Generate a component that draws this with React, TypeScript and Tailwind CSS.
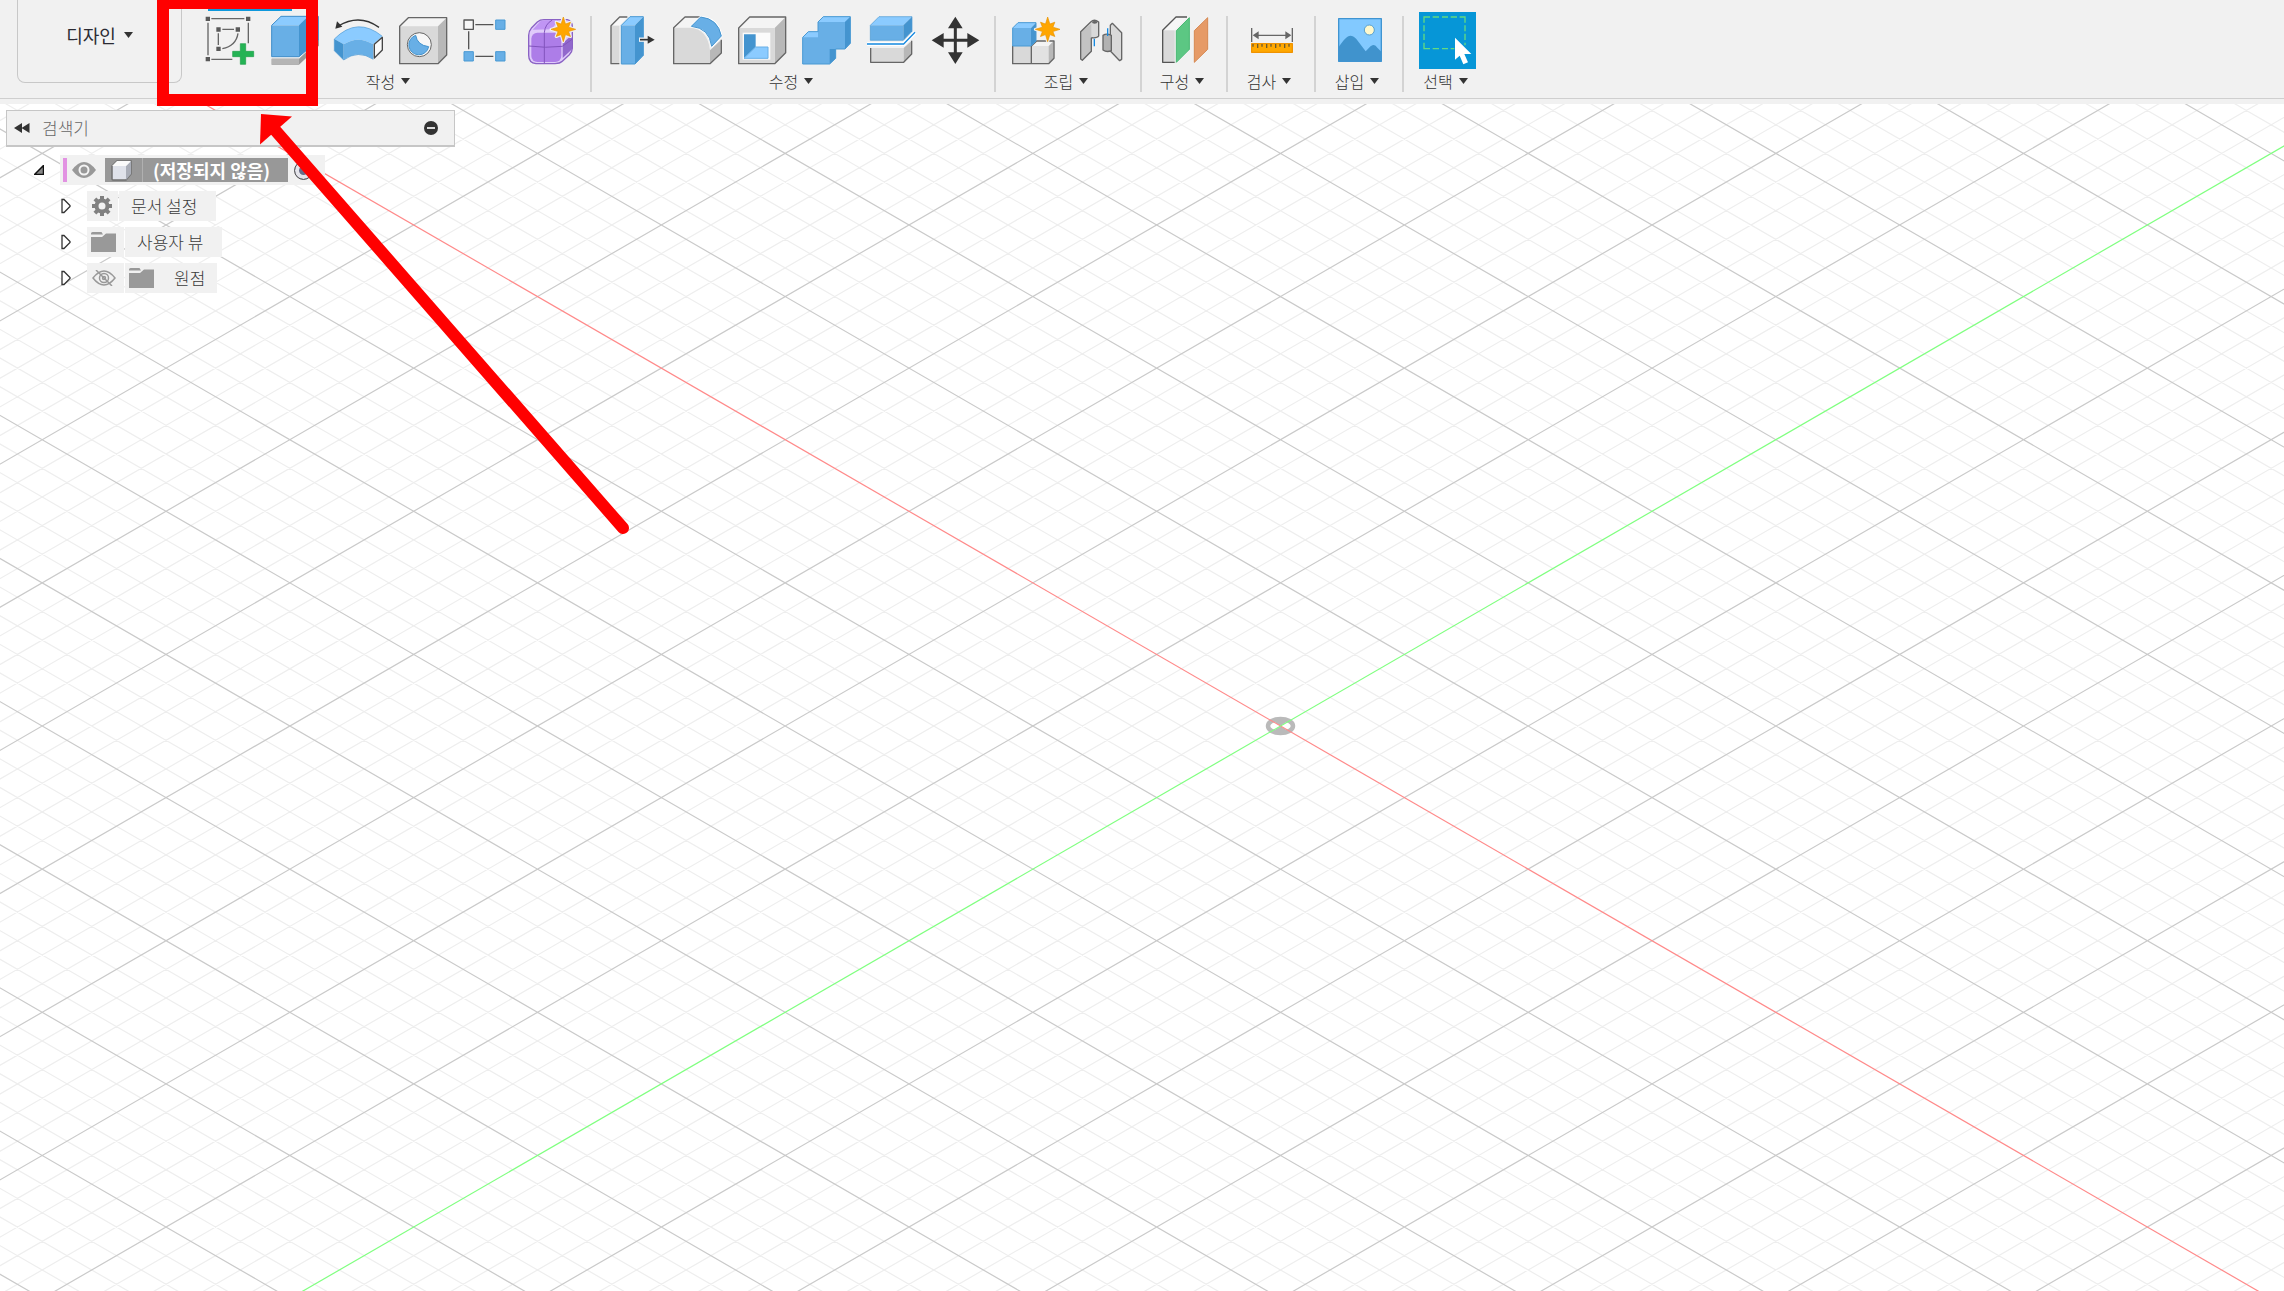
import type { ReactNode } from "react";

const OX = 1280.5;
const OY = 726;
const SLOPE = 0.578;
const STEP = 28.63;

const G = "#666666";
const LIGHT = "#f4f4f4";
const MID = "#d9d9d9";
const DARK = "#b8b8b8";
const B1 = "#8bcbff";
const B2 = "#68afe6";
const B3 = "#4494cf";

const burst = (cx: number, cy: number, outer: number, inner: number) =>
  Array.from({ length: 16 }, (_, i) => {
    const r = i % 2 ? inner : i % 4 === 0 ? outer : outer * 0.82;
    const a = (i * Math.PI) / 8 - Math.PI / 2;
    return `${(cx + r * Math.cos(a)).toFixed(1)},${(cy + r * Math.sin(a)).toFixed(1)}`;
  }).join(" ");

function Caret() {
  return (
    <svg width="9" height="6" viewBox="0 0 9 6" aria-hidden="true">
      <path d="M0 0h9L4.500 6z" fill="#333" />
    </svg>
  );
}

function Tool({ label, box, children }: { label: string; box: string; children: ReactNode }) {
  return (
    <button type="button" aria-label={label} title={label} className="h-[57px] w-14 shrink-0">
      <svg viewBox={box} className="h-full w-full" strokeLinejoin="round">
        {children}
      </svg>
    </button>
  );
}

function Group({ label, pad, last, children }: { label: string; pad: string; last?: boolean; children: ReactNode }) {
  return (
    <section className="flex shrink-0">
      <div className={`flex flex-col items-center pt-3 ${pad}`}>
        <div className="flex gap-2">{children}</div>
        <button type="button" className="flex h-6 items-center gap-1.5 pr-1 text-[16px] font-light leading-6 text-[#333]">
          {label}
          <Caret />
        </button>
      </div>
      {!last && <div className="mt-4 h-[76px] w-0.5 bg-[#d3d3d3]" />}
    </section>
  );
}

function Toolbar() {
  return (
    <header className="relative shrink-0 bg-[#f1f1f1] pb-[5px]">
      <div className="flex h-[99px] items-start border-b border-[#cfcfcf]">
        <button
          type="button"
          className="ml-[17px] flex h-[83px] w-[165px] shrink-0 items-center justify-center gap-2 rounded-b-lg border border-t-0 border-[#c8c8c8] pb-3 text-[18px] font-normal text-[#2b2b33]"
        >
          디자인
          <Caret />
        </button>
        <Group label="작성" pad="pl-5 pr-3">
          <Tool label="스케치 작성" box="606 36 168 171">
            <g stroke={G} strokeWidth="4" fill="none">
              <path d="M634 56H733M624 68V166M634 178H697M745 68V130M655 100V135M667 88H702M714 100Q708 138 667 146" />
            </g>
            <g fill="#595959">
              <path d="M617 50h13v13h-13zM738 50h13v13h-13zM617 171h13v13h-13zM649 82h13v13h-13zM707 82h13v13h-13zM649 140h13v13h-13z" />
            </g>
            <path d="M721 131h16v23h24v16h-24v23h-16v-23h-23v-16h23z" fill="#24b354" stroke="#1d9e48" strokeWidth="2" />
          </Tool>
          <Tool label="돌출" box="798 36 168 171">
            <path d="M815 176h82l60-57v18l-60 57h-82z" fill="#999" />
            <path d="M815 176h82v18h-82z" fill="#b5b5b5" />
            <path d="M815 76l28-27h110l-56 27z" fill={B1} />
            <path d="M815 76h82v94h-82z" fill={B2} />
            <path d="M897 76l28-27h30v72l-58 49z" fill={B3} />
            <path d="M815 76l28-27h112v72l-58 49h-82z" fill="none" stroke="#3e8dc9" strokeWidth="3" />
          </Tool>
          <Tool label="회전" box="30 36 168 171">
            <path d="M177 82Q118 40 55 78" fill="none" stroke="#333" strokeWidth="4" />
            <path d="M46 86l5-22 16 16z" fill="#333" />
            <path d="M43 117Q112 48 187 109L160 133Q114 105 71 133z" fill={B1} />
            <path d="M43 117L71 133V180L43 152z" fill={B3} />
            <path d="M71 133Q114 105 160 133V178Q114 148 71 180z" fill={B2} />
            <path d="M43 117Q112 48 187 109M43 117V152L71 180Q114 148 160 178" fill="none" stroke="#4b99d3" strokeWidth="2" />
            <path d="M163 133L187 112V150L163 174z" fill="#fafafa" stroke="#444" strokeWidth="4" />
          </Tool>
          <Tool label="구멍" box="222 36 168 171">
            <path d="M239 79L265 53H380L354 79z" fill={LIGHT} />
            <path d="M354 79L380 53V165L354 191z" fill={DARK} />
            <path d="M239 79H354V191H239z" fill={MID} />
            <path d="M239 79L265 53H380V165L354 191H239z" fill="none" stroke={G} strokeWidth="4" />
            <circle cx="298" cy="134" r="36" fill="#f7f7f7" stroke={G} strokeWidth="3" />
            <path d="M287 106Q292 136 326 140A30 30 0 1 1 287 106z" fill={B2} stroke={B3} strokeWidth="3" />
          </Tool>
          <Tool label="패턴" box="414 36 168 171">
            <path d="M466 74H520M446 94V148M466 169H520" stroke="#555" strokeWidth="4" />
            <path d="M432 60h28v28h-28z" fill="#f8f8f8" stroke="#555" strokeWidth="4" />
            <path d="M527 60h28v28h-28zM432 155h28v28h-28zM527 155h28v28h-28z" fill={B2} stroke="#4999d3" strokeWidth="3" />
          </Tool>
          <Tool label="양식 작성" box="606 36 168 171">
            <path d="M626 106Q626 94 635 83L652 66Q660 59 672 59H742Q757 63 757 80V145Q757 155 748 164L727 184Q720 191 705 191H648Q626 189 626 166z" fill="#dfcbfa" stroke="#8a62c4" strokeWidth="4" />
            <path d="M638 89L661 64Q668 60 680 61H715L695 88z" fill="#c095f4" />
            <path d="M728 130L756 104V148L728 174z" fill="#9168cc" />
            <rect x="634" y="98" width="90" height="88" rx="18" fill="#ad7de8" />
            <path d="M673 190V98Q675 72 697 60M627 138Q675 145 727 139L756 118" fill="none" stroke="#8254bd" strokeWidth="3" />
            <polygon points={burst(730, 88, 37, 17)} fill="#ffa600" stroke="#f1f1f1" strokeWidth="9" />
            <polygon points={burst(730, 88, 37, 17)} fill="#ffa600" stroke="#e99200" strokeWidth="2" />
          </Tool>
        </Group>
        <Group label="수정" pad="px-[13px]">
          <Tool label="눌러 당기기" box="45 36 168 171">
            <path d="M63 77L89 51H112L88 77z" fill="#f8f8f8" />
            <path d="M63 77H88V191H63z" fill={MID} />
            <path d="M112 51H89L63 77V191H88" fill="none" stroke={G} strokeWidth="4" />
            <path d="M94 76L120 50H160L135 76z" fill={B1} />
            <path d="M135 76L160 50V166L135 192z" fill={B3} />
            <path d="M94 76H135V192H94z" fill={B2} />
            <path d="M94 76L120 50H160V166L135 192H94z" fill="none" stroke="#4999d3" strokeWidth="3" />
            <path d="M147 119H180" stroke="#f1f1f1" strokeWidth="13" />
            <path d="M150 119H176" stroke="#333" strokeWidth="5" />
            <path d="M173 107L194 119L173 131z" fill="#333" />
          </Tool>
          <Tool label="모깎기" box="237 36 168 171">
            <path d="M251 83L285 51H330L302 83z" fill={LIGHT} />
            <path d="M251 83H302Q353 88 360 151V191H251z" fill={MID} />
            <path d="M360 151L394 119V159L360 191z" fill={DARK} />
            <path d="M330 51H285L251 83V191H360L394 159V119" fill="none" stroke={G} strokeWidth="4" />
            <path d="M304 79L332 51Q384 56 394 108L365 139Q358 84 304 79z" fill={B2} stroke="#fff" strokeWidth="7" />
            <path d="M304 79L332 51Q384 56 394 108L365 139Q358 84 304 79z" fill={B2} stroke={B3} strokeWidth="3" />
          </Tool>
          <Tool label="쉘" box="429 36 168 171">
            <path d="M446 84L479 51H587L554 84z" fill={LIGHT} />
            <path d="M554 84L587 51V158L554 191z" fill={DARK} />
            <path d="M446 84H554V191H446z" fill={MID} />
            <path d="M446 84L479 51H587V158L554 191H446z" fill="none" stroke={G} strokeWidth="4" />
            <path d="M458 98H541V179H458z" fill="#fbfbfb" />
            <path d="M462 103H497V141L462 175z" fill={B3} />
            <path d="M497 141H534V175H462z" fill={B1} stroke={B2} strokeWidth="3" />
          </Tool>
          <Tool label="결합" box="621 36 168 171">
            <path d="M638 112L655 95H684V66L700 50H781V130L765 147H737V175L719 192H638z" fill={B2} />
            <path d="M684 66L700 50H781L765 66zM638 112L655 95H684V112z" fill={B1} />
            <path d="M765 66L781 50V130L765 147zM719 147H737V175L719 192z" fill={B3} />
            <path d="M638 112L655 95H684V66L700 50H781V130L765 147H737V175L719 192H638z" fill="none" stroke="#4999d3" strokeWidth="3" />
          </Tool>
          <Tool label="면 분할" box="813 36 168 171">
            <path d="M841 76L867 50H966L940 76z" fill={B1} />
            <path d="M841 76H940V121H841z" fill={B2} />
            <path d="M940 76L966 50V94L940 121z" fill={B3} />
            <path d="M841 76L867 50H966V94L940 121H841z" fill="none" stroke="#4999d3" strokeWidth="2" />
            <path d="M842 144H941V187H842z" fill={MID} />
            <path d="M941 144L965 122V162L941 187z" fill={DARK} />
            <path d="M842 144V187H941L965 162V122" fill="none" stroke={G} strokeWidth="4" />
            <path d="M831 132H941L975 97" fill="none" stroke="#fff" strokeWidth="12" />
            <path d="M831 132H941L975 97" fill="none" stroke="#1589e0" strokeWidth="4" />
          </Tool>
          <Tool label="이동/복사" box="1005 36 168 171">
            <path d="M1096 75V168M1050 121H1142" stroke="#333" strokeWidth="9" />
            <path d="M1096 50L1118 85H1074zM1096 192L1118 157H1074zM1025 121L1061 99V143zM1168 121L1132 99V143z" fill="#333" />
          </Tool>
        </Group>
        <Group label="조립" pad="px-3">
          <Tool label="새 구성요소" box="54 36 168 171">
            <path d="M68 138H124V191H68z" fill={MID} />
            <path d="M124 138L140 123H191L176 138z" fill={LIGHT} />
            <path d="M124 138H176V191H124z" fill="#e2e2e2" />
            <path d="M176 138L191 123V175L176 191z" fill={DARK} />
            <path d="M68 138V191H176L192 175V123H140L124 138V191" fill="none" stroke={G} strokeWidth="4" />
            <path d="M68 84L84 68H138L123 84z" fill={B1} />
            <path d="M68 84H123V138H68z" fill={B2} />
            <path d="M123 84L138 68V123L123 138z" fill={B3} />
            <path d="M68 84L84 68H138V123L123 138H68z" fill="none" stroke="#4999d3" strokeWidth="3" />
            <polygon points={burst(173, 88, 37, 17)} fill="#ffa600" stroke="#f1f1f1" strokeWidth="9" />
            <polygon points={burst(173, 88, 37, 17)} fill="#ffa600" stroke="#e99200" strokeWidth="2" />
          </Tool>
          <Tool label="조인트" box="246 36 168 171">
            <path d="M272 95L303 65Q313 56 326 66V108Q322 115 304 113V154L277 181L272 177z" fill={MID} />
            <path d="M304 72V154L277 181L272 177V95z" fill="#c3c3c3" />
            <path d="M304 113V154L277 181L272 177V95L303 65Q313 56 326 66V108Q322 115 304 113" fill="none" stroke={G} strokeWidth="4" />
            <ellipse cx="314" cy="67" rx="8" ry="4" fill={G} />
            <path d="M313 116V139" stroke="#1589e0" strokeWidth="4" />
            <path d="M361 76L367 70L395 98V178L389 182L361 153z" fill={MID} stroke={G} strokeWidth="4" />
            <path d="M339 106Q350 99 364 106V152Q350 158 339 150z" fill="#b2b2b2" stroke={G} strokeWidth="4" />
            <path d="M353 85V108" stroke="#1589e0" strokeWidth="4" />
          </Tool>
        </Group>
        <Group label="구성" pad="px-3.5">
          <Tool label="평면 간격띄우기" box="498 36 168 171">
            <path d="M518 91L558 51H591L554 91z" fill="#f6f6f6" />
            <path d="M518 91H554V187H518z" fill={MID} />
            <path d="M591 51H558L518 91V187H554" fill="none" stroke="#555" strokeWidth="4" />
            <path d="M559 92L598 53V148L559 187z" fill="#5cc783" stroke="#48b873" strokeWidth="3" />
            <path d="M613 92L653 53V148L613 187z" fill="#e69a66" stroke="#d68851" strokeWidth="3" />
          </Tool>
        </Group>
        <Group label="검사" pad="px-[15px]">
          <Tool label="측정" box="69 36 168 171">
            <path d="M95 84V126M217 84V126M108 106H205" stroke={G} strokeWidth="4" />
            <path d="M98 106L116 94V118zM214 106L196 94V118z" fill={G} />
            <path d="M95 131H217V157H95z" fill="#ffa800" stroke="#f09300" strokeWidth="4" />
            <path d="M99 132v8M113 132v12M126 132v8M140 132v12M153 132v8M167 132v12M180 132v8M194 132v12M207 132v8" stroke="#6c5a30" strokeWidth="4" />
          </Tool>
        </Group>
        <Group label="삽입" pad="px-[15px]">
          <Tool label="이미지 삽입" box="333 36 168 171">
            <path d="M356 56H484V184H356z" fill="#82c9ff" />
            <path d="M356 141C379 109 389 97 409 117L437 154C449 143 458 124 472 143L484 155V184H356z" fill="#4093cd" />
            <circle cx="448" cy="90" r="15" fill="#fff9cd" stroke="#5aa0cc" strokeWidth="3" />
            <path d="M356 56H484V184H356z" fill="none" stroke="#3f94d1" strokeWidth="4" />
          </Tool>
        </Group>
        <Group label="선택" pad="pl-[15px]" last>
          <button type="button" aria-label="선택 도구" aria-pressed="true" className="size-[57px] bg-[#0696d7]">
            <svg viewBox="597 36 171 171" className="h-full w-full">
              <path d="M612 68V51H630M638 51H657M666 51H684M692 51H711M719 51H735V68M735 76V94M735 101V120M612 76V94M612 101V120M612 128V146H630M638 146H657M666 146H684M692 146H703M735 128V136" fill="none" stroke="#62da81" strokeWidth="4" />
              <path d="M705 113V179L719 167L730 193L744 187L733 162H754z" fill="#fff" />
            </svg>
          </button>
        </Group>
      </div>
      <div className="absolute left-[208px] top-0 h-[11px] w-[84px] bg-[#0f98dc]" />
    </header>
  );
}

function Grid() {
  const left = -40 - OX;
  const right = 2324 - OX;
  const path = (major: boolean) => {
    let d = "";
    for (let k = -75; k <= 75; k++) {
      if (k === 0 || (k % 5 === 0) !== major) continue;
      const c = OY + k * STEP;
      d += `M${left + OX} ${c + SLOPE * left}L${right + OX} ${c + SLOPE * right}`;
      d += `M${left + OX} ${c - SLOPE * left}L${right + OX} ${c - SLOPE * right}`;
    }
    return d;
  };
  return (
    <svg className="absolute inset-0 h-full w-full" viewBox="0 104 2284 1187" preserveAspectRatio="xMidYMid slice" aria-hidden="true">
      <path d={path(false)} stroke="#eeeeee" strokeWidth="1.200" fill="none" />
      <path d={path(true)} stroke="#cacaca" strokeWidth="1.200" fill="none" />
      <ellipse cx={OX} cy={OY} rx="12.500" ry="7" fill="#fff" stroke="#bababa" strokeWidth="4.500" />
      <path d={`M${OX} ${OY}l-9 -6h18zM${OX} ${OY}l-9 6h18z`} fill="#bababa" />
      <path d={`M${left + OX} ${OY + SLOPE * left}L${right + OX} ${OY + SLOPE * right}`} stroke="#ff8a8a" strokeWidth="1.200" />
      <path d={`M${left + OX} ${OY - SLOPE * left}L${right + OX} ${OY - SLOPE * right}`} stroke="#80ff80" strokeWidth="1.200" />
    </svg>
  );
}

function Expander() {
  return (
    <button type="button" aria-label="펼치기" className="ml-[61px] mr-4 h-4 w-2.5">
      <svg viewBox="0 0 10 16" className="h-full w-full">
        <path d="M1 1.500V14.500H3L9 8.500V7.500L3 1.500z" fill="#fff" stroke="#333" strokeWidth="1.300" />
      </svg>
    </button>
  );
}

function Folder() {
  return (
    <svg width="25" height="20" viewBox="0 0 25 20" aria-hidden="true">
      <path d="M0 1.500Q0 0 1.500 0H10.500L12 2.500H0zM0 5H11L15 1.500H25V20H0z" fill="#999" />
    </svg>
  );
}

function Gear() {
  return (
    <svg width="20" height="20" viewBox="-10 -10 20 20" aria-hidden="true">
      {[0, 45, 90, 135].map((a) => (
        <rect key={a} x="-2" y="-10" width="4" height="20" fill="#808080" transform={`rotate(${a})`} />
      ))}
      <circle r="5.500" fill="#f1f1f1" stroke="#808080" strokeWidth="4" />
    </svg>
  );
}

function Browser() {
  return (
    <aside className="relative w-[455px] pl-1.5 pt-1.5 text-[17px] font-light leading-6 text-[#3c3c3c]">
      <div className="flex h-[37px] w-full items-center border border-b-2 border-[#c6c6c6] bg-[#f1f1f1] pl-[7px] pr-4">
        <button type="button" aria-label="검색기 접기" className="h-2.5 w-4">
          <svg viewBox="0 0 16 10" className="h-full w-full">
            <path d="M0 5L8 0V10zM7.500 5L15.500 0V10z" fill="#333" />
          </svg>
        </button>
        <h2 className="ml-3 flex-1 font-light text-[#666]">검색기</h2>
        <button type="button" aria-label="패널 최소화" className="size-3.5">
          <svg viewBox="0 0 14 14" className="h-full w-full">
            <circle cx="7" cy="7" r="7" fill="#333" />
            <path d="M3 7H11" stroke="#ddd" strokeWidth="2" />
          </svg>
        </button>
      </div>
      <ul className="-ml-1.5 mt-2 flex flex-col gap-1.5">
        <li className="flex h-[30px] items-center">
          <button type="button" aria-label="접기" className="ml-[34px] mr-4 size-2.5">
            <svg viewBox="0 0 10 10" className="h-full w-full">
              <path d="M.5 9.500H9.500V.5z" fill="#888" stroke="#111" strokeWidth="1.500" />
            </svg>
          </button>
          <div className="flex h-full w-[265px] items-center bg-[#f1f1f1] pl-[3px]">
            <div className="h-6 w-1 bg-[#e292e2]" />
            <button type="button" aria-label="표시 여부" className="ml-[5px] h-4 w-6">
              <svg viewBox="0 0 24 16" className="h-full w-full">
                <path d="M0 8Q12-8 24 8Q12 24 0 8z" fill="#999" />
                <circle cx="12" cy="8" r="4.500" fill="#999" stroke="#f4f4f4" strokeWidth="2" />
              </svg>
            </button>
            <div className="ml-[9px] flex h-6 w-[183px] items-center bg-[#989898]">
              <div className="flex h-full w-[38px] items-center border-r border-[#b0b0b0] pl-1.5">
                <svg width="21" height="21" viewBox="0 0 21 21" aria-hidden="true">
                  <path d="M1 6L6 1H20V14L15 20H2Q1 20 1 19z" fill="#dfe2ea" stroke="#6f6f6f" strokeWidth="1.500" />
                  <path d="M15 6L20 1V14L15 20z" fill="#a9adb7" />
                  <path d="M1 6L6 1H20L15 6z" fill="#fafafa" />
                </svg>
              </div>
              <span className="flex-1 pl-2.5 text-[18px] font-bold text-white">(저장되지 않음)</span>
            </div>
            <input type="radio" name="active" defaultChecked aria-label="구성요소 활성화" className="ml-1.5 size-[19px] appearance-none rounded-full border border-[#555] bg-[#686c88] shadow-[inset_0_0_0_4px_#e4e4ea]" />
          </div>
        </li>
        <li className="flex h-[30px] items-center">
          <Expander />
          <div className="flex h-full gap-px">
            <span className="flex w-[31px] items-center bg-[#f1f1f1] pl-[5px]"><Gear /></span>
            <span className="flex w-[97px] items-center bg-[#f1f1f1] pl-3">문서 설정</span>
          </div>
        </li>
        <li className="flex h-[30px] items-center">
          <Expander />
          <div className="flex h-full gap-px">
            <span className="flex w-[37px] items-center bg-[#f1f1f1] pl-1"><Folder /></span>
            <span className="flex w-[97px] items-center bg-[#f1f1f1] pl-3">사용자 뷰</span>
          </div>
        </li>
        <li className="flex h-[30px] items-center">
          <Expander />
          <div className="flex h-full gap-px">
            <button type="button" aria-label="원점 표시" className="flex w-[37px] items-center bg-[#f1f1f1] pl-[5px]">
              <svg width="24" height="16" viewBox="0 0 24 16" fill="none" stroke="#999" strokeWidth="1.500">
                <path d="M1 8Q12-6 23 8Q12 22 1 8zM4 0L20 16" />
                <circle cx="12" cy="8" r="4.500" />
                <circle cx="12" cy="8" r="1.500" />
              </svg>
            </button>
            <span className="flex w-[92px] items-center gap-5 bg-[#f1f1f1] pl-1"><Folder />원점</span>
          </div>
        </li>
      </ul>
    </aside>
  );
}

export default function App() {
  return (
    <div className="relative flex min-h-screen flex-col overflow-hidden bg-white font-['Noto_Sans_CJK_KR',sans-serif]">
      <Toolbar />
      <main className="relative flex-1">
        <Grid />
        <Browser />
      </main>
      <div className="pointer-events-none absolute -top-1 left-[157px] h-[110px] w-[161px] border-12 border-t-[13px] border-[#ff0000]" />
      <svg className="pointer-events-none absolute left-0 top-0" width="640" height="540" viewBox="0 0 640 540" aria-hidden="true">
        <path d="M275 130L623 528" stroke="#ff0000" strokeWidth="12" strokeLinecap="round" />
        <path d="M261 114L292 116.500L260 144.500z" fill="#ff0000" />
      </svg>
    </div>
  );
}
